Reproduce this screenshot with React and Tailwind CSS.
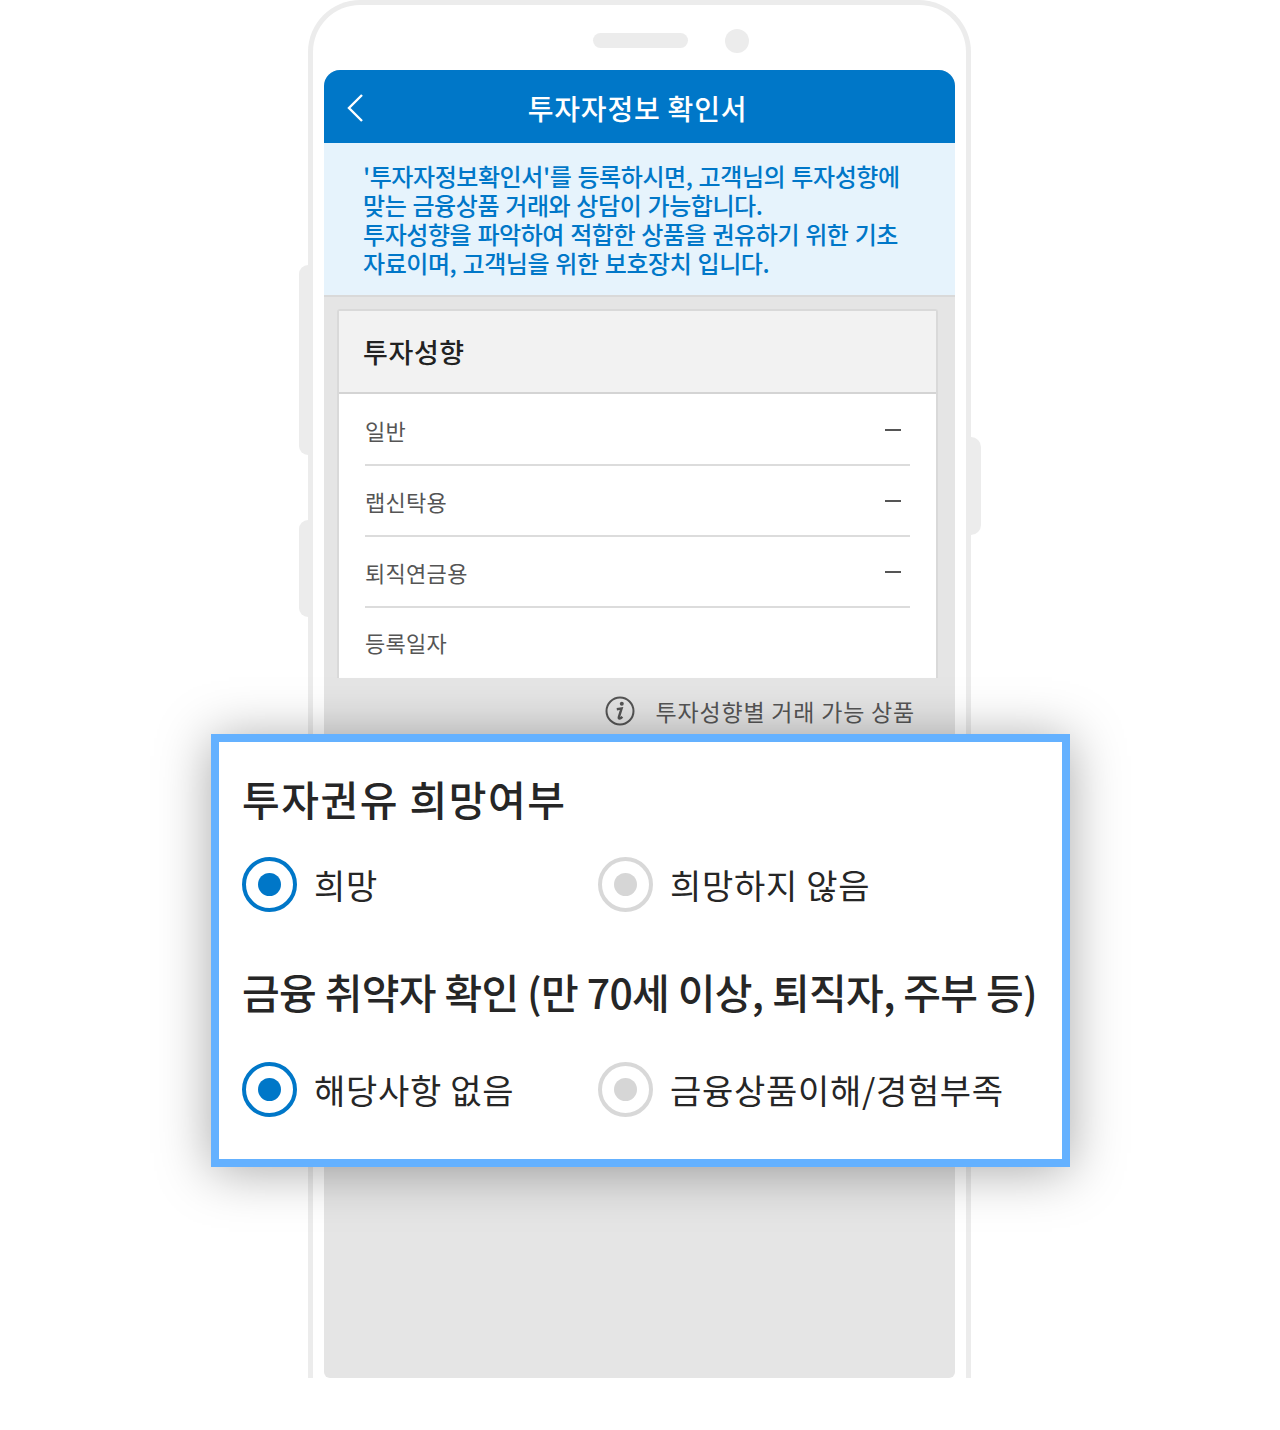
const font = "font-['Noto_Sans_CJK_KR','Noto_Sans',sans-serif]";

const rows = [
  { label: '일반', value: true },
  { label: '랩신탁용', value: true },
  { label: '퇴직연금용', value: true },
  { label: '등록일자', value: false },
];

const Radio = ({ checked, label }) => (
  <div className="flex items-center gap-[17px]">
    <span
      className={`flex h-[55px] w-[55px] shrink-0 items-center justify-center rounded-full border-[4px] ${
        checked ? 'border-[#0077c8]' : 'border-[#d8d8d8]'
      }`}
    >
      <span className={`h-[23px] w-[23px] rounded-full ${checked ? 'bg-[#0077c8]' : 'bg-[#d6d6d6]'}`} />
    </span>
    <span className="whitespace-nowrap text-[34px] leading-[55px] tracking-[0.7px] text-[#262626]">{label}</span>
  </div>
);

const RadioRow = ({ left, right }) => (
  <div className="flex">
    <div className="w-[356px]">
      <Radio checked label={left} />
    </div>
    <Radio label={right} />
  </div>
);

const App = () => {
  return (
    <div className={`relative h-[1430px] w-[1280px] overflow-hidden bg-white ${font}`}>
      {/* phone body */}
      <div className="relative ml-[308px] h-[1378px] w-[663px] rounded-t-[52px] border-x-[5px] border-t-[5px] border-[#ececec] bg-white">
        <div className="absolute left-[-14px] top-[260px] h-[190px] w-[9px] rounded-l-[10px] bg-[#ececec]" />
        <div className="absolute left-[-14px] top-[515px] h-[97px] w-[9px] rounded-l-[10px] bg-[#ececec]" />
        <div className="absolute right-[-15px] top-[432px] h-[98px] w-[10px] rounded-r-[10px] bg-[#ececec]" />

        <div className="flex h-[65px] items-center justify-center pl-[62px] pt-[6px]">
          <div className="h-[15px] w-[95px] rounded-full bg-[#ececec]" />
          <div className="ml-[37px] h-[24px] w-[24px] rounded-full bg-[#ececec]" />
        </div>

        {/* screen */}
        <div className="mx-[11px] flex h-[1308px] flex-col overflow-hidden rounded-t-[16px] rounded-b-[6px] bg-[#e5e5e5]">
          <div className="relative flex h-[73px] shrink-0 items-center justify-center bg-[#0077c8] pr-[4px] pt-[3px]">
            <svg className="absolute left-[22px] top-[23px]" width="18" height="30" viewBox="0 0 18 30" fill="none">
              <path d="M16 2 L3 15 L16 28" stroke="#fff" strokeWidth="2.4" />
            </svg>
            <h1 className="text-[28px] font-medium tracking-[0.8px] text-white">투자자정보 확인서</h1>
          </div>

          <div className="h-[154px] shrink-0 border-b-[2px] border-[#d9d9d9] bg-[#e6f3fc] pl-[39px] pt-[18px] text-[24px] font-medium leading-[29px] tracking-[-0.43px] [word-spacing:1.2px] text-[#0077c8] whitespace-nowrap">
            '투자자정보확인서'를 등록하시면, 고객님의 투자성향에
            <br />
            맞는 금융상품 거래와 상담이 가능합니다.
            <br />
            투자성향을 파악하여 적합한 상품을 권유하기 위한 기초
            <br />
            자료이며, 고객님을 위한 보호장치 입니다.
          </div>

          <div className="ml-[13px] mr-[17px] mt-[12px] h-[369px] shrink-0 rounded-t-[3px] border-x-[2px] border-t-[2px] border-[#d9d9d9] bg-white">
            <div className="flex h-[83px] items-center border-b-[2px] border-[#d4d4d4] bg-[#f2f2f2] pl-[24px] pt-[2px] text-[27px] font-medium tracking-[0.6px] text-[#222]">
              투자성향
            </div>
            <div className="px-[26px] pt-[1px]">
              {rows.map((row, i) => (
                <div
                  key={row.label}
                  className={`flex h-[71px] items-center justify-between text-[22px] tracking-[0.3px] text-[#555] ${
                    i < 3 ? 'border-b-[2px] border-[#dcdcdc]' : ''
                  }`}
                >
                  <span className={i === 3 ? 'mb-[3px]' : 'mt-[1px]'}>{row.label}</span>
                  {row.value && <span className="mr-[9px] mt-[1px] h-[2px] w-[16px] bg-[#555]" />}
                </div>
              ))}
            </div>
          </div>

          <div className="mr-[40px] mt-[16px] flex items-center justify-end gap-[21px] text-[23px] leading-[34px] tracking-[0.8px] text-[#555]">
            <svg width="30" height="30" viewBox="0 0 30 30" fill="none">
              <circle cx="15" cy="15" r="13.5" stroke="#555" strokeWidth="2" />
              <circle cx="16.8" cy="7.8" r="2" fill="#555" />
              <path d="M11.8 13.2 L16.6 12.4 L13.8 21.4 C13.5 22.8 14.8 23.2 17.4 20.8" stroke="#555" strokeWidth="2.4" />
            </svg>
            <span>투자성향별 거래 가능 상품</span>
          </div>
        </div>
      </div>

      {/* zoomed callout */}
      <div className="absolute left-[211px] top-[734px] h-[433px] w-[859px] border-[8px] border-[#64b1ff] bg-white pl-[23px] pt-[28px] shadow-[0_4px_50px_rgba(0,0,0,0.34)]">
        <h2 className="text-[41px] font-medium leading-[56px] tracking-[1.5px] text-[#262626]">투자권유 희망여부</h2>
        <div className="mt-[31px]">
          <RadioRow left="희망" right="희망하지 않음" />
        </div>
        <h2 className="mt-[51px] whitespace-nowrap text-[41px] font-medium leading-[56px] tracking-[-0.66px] text-[#262626]">
          금융 취약자 확인 (만 70세 이상, 퇴직자, 주부 등)
        </h2>
        <div className="mt-[43px]">
          <RadioRow left="해당사항 없음" right="금융상품이해/경험부족" />
        </div>
      </div>
    </div>
  );
};

export default App;
